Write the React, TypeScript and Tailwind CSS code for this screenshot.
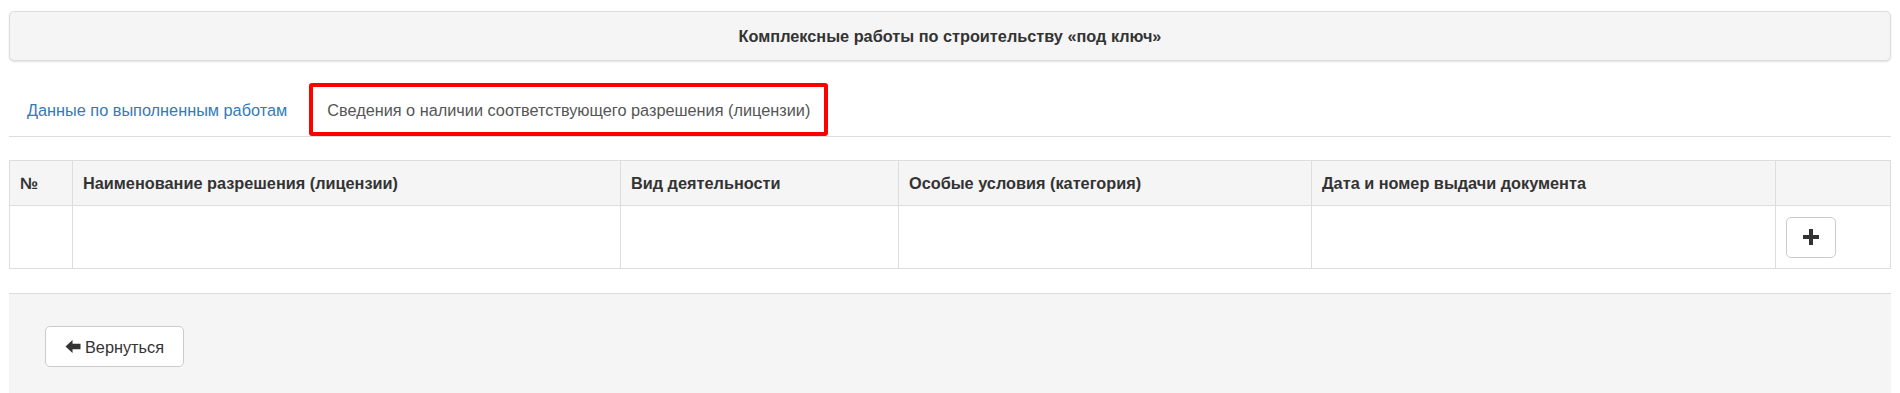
import React from "react";

function ArrowLeftIcon() {
  return (
    <svg viewBox="0 0 16 16" className="h-[15px] w-[16px] fill-[#333]">
      <path d="M0 8 L7.5 1 V5 H16 V11 H7.5 V15 Z" />
    </svg>
  );
}

function PlusIcon() {
  return (
    <svg viewBox="0 0 16 16" className="h-[16px] w-[16px] fill-[#333]">
      <path d="M6 0h4v6h6v4h-6v6H6v-6H0V6h6z" />
    </svg>
  );
}

const columns = [
  { title: "№", width: "w-[63px]" },
  { title: "Наименование разрешения (лицензии)", width: "w-[548px]" },
  { title: "Вид деятельности", width: "w-[278px]" },
  { title: "Особые условия (категория)", width: "w-[413px]" },
  { title: "Дата и номер выдачи документа", width: "w-[464px]" },
  { title: "", width: "" },
];

export default function App() {
  return (
    <div className="min-h-[393px] bg-white px-[9px] pt-[11px] font-['Liberation_Sans',Arial,sans-serif] text-[16.3px] leading-[24px] text-[#333]">
      {/* panel heading */}
      <div className="flex h-[50px] items-center justify-center rounded-[5px] border border-[#ddd] bg-[#f5f5f5] font-bold shadow-[0_1px_2px_rgba(0,0,0,0.12)]">
        Комплексные работы по строительству «под ключ»
      </div>

      {/* tabs */}
      <div className="mt-[23px] flex h-[53px] items-end border-b border-[#ddd]">
        <a className="mb-[2px] mr-[4px] flex h-[48px] cursor-pointer items-center px-[18px] text-[#337ab7]">
          Данные по выполненным работам
        </a>
        <div className="flex h-[53px] items-center rounded-[3px] border-[4px] border-[#ff0000] bg-white px-[14px] text-[#555]">
          Сведения о наличии соответствующего разрешения (лицензии)
        </div>
      </div>

      {/* table */}
      <table className="mt-[23px] w-full table-fixed border-collapse border border-[#ddd]">
        <thead>
          <tr className="bg-[#f5f5f5]">
            {columns.map((c, i) => (
              <th
                key={i}
                className={`${c.width} h-[45px] border border-[#ddd] px-[10px] text-left font-bold`}
              >
                {c.title}
              </th>
            ))}
          </tr>
        </thead>
        <tbody>
          <tr>
            <td className="border border-[#ddd]"></td>
            <td className="border border-[#ddd]"></td>
            <td className="border border-[#ddd]"></td>
            <td className="border border-[#ddd]"></td>
            <td className="border border-[#ddd]"></td>
            <td className="h-[63px] border border-[#ddd] px-[10px] py-[10px]">
              <button className="flex h-[41px] w-[50px] items-center justify-center rounded-[5px] border border-[#ccc] bg-white">
                <PlusIcon />
              </button>
            </td>
          </tr>
        </tbody>
      </table>

      {/* footer */}
      <div className="mt-[24px] h-[120px] border-t border-[#ddd] bg-[#f5f5f5] px-[36px] pt-[32px]">
        <button className="flex h-[41px] w-[139px] items-center justify-center gap-[4px] rounded-[5px] border border-[#ccc] bg-white text-[#333]">
          <ArrowLeftIcon />
          Вернуться
        </button>
      </div>
    </div>
  );
}
